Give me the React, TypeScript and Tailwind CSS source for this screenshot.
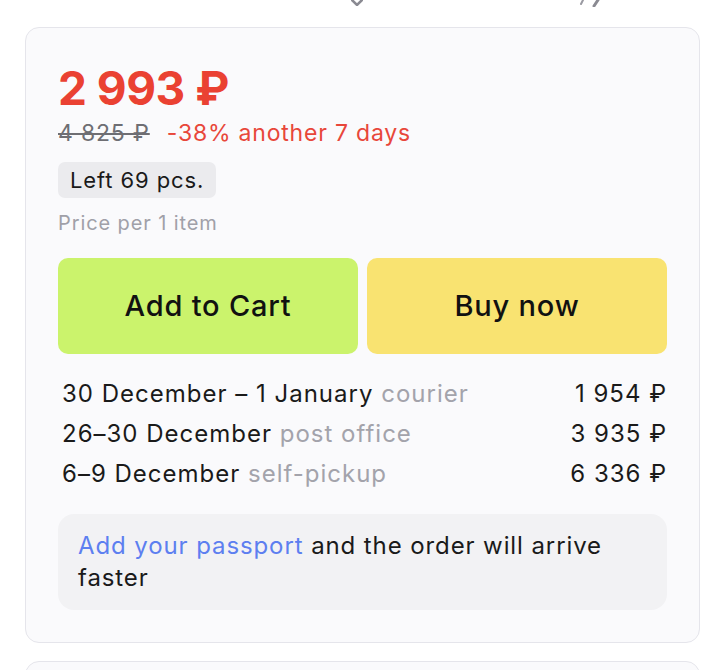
import React from 'react';

const deliveries = [
  { date: '30 December – 1 January', kind: 'courier', price: '1 954 ₽' },
  { date: '26–30 December', kind: 'post office', price: '3 935 ₽' },
  { date: '6–9 December', kind: 'self-pickup', price: '6 336 ₽' },
];

const App: React.FC = () => {
  return (
    <div className="w-[718px] h-[670px] overflow-hidden bg-white font-['Inter','Liberation_Sans',sans-serif] text-[#1a1a1a]">
      {/* cut-off icons of the block above */}
      <div className="h-[27px] flex items-start">
        <svg className="ml-[351px]" width="12" height="6" viewBox="0 0 12 6">
          <path d="M1 0 L6 5 L11 0" fill="none" stroke="#8a8a92" strokeWidth="2.5" strokeLinecap="round" />
        </svg>
        <svg className="ml-[216px]" width="24" height="7" viewBox="0 0 24 7">
          <path d="M4 0 L2 4" stroke="#9a9aa2" strokeWidth="2" strokeLinecap="round" />
          <path d="M19 0 L15 6" stroke="#8a8a92" strokeWidth="3" strokeLinecap="round" />
        </svg>
      </div>

      {/* price card */}
      <div className="ml-[25px] w-[675px] rounded-[14px] border border-[#e5e5eb] bg-[#fafafc] px-8 pt-9 pb-8">
        <div className="text-[46px] leading-[48px] font-bold text-[#ea4132] tracking-[-0.5px]">2 993 ₽</div>
        <div className="mt-[7px] flex items-center gap-[17px] text-[23px] leading-[28px] tracking-[0.8px]">
          <span className="text-[#6e6e73] line-through">4 825 ₽</span>
          <span className="text-[#e8473a]">-38% another 7 days</span>
        </div>
        <div className="mt-[15px] inline-flex h-9 items-center rounded-[7px] bg-[#ebebee] px-3 text-[22px] leading-9 tracking-[0.9px]">
          Left 69 pcs.
        </div>
        <div className="mt-[13px] text-[20px] leading-6 tracking-[0.9px] text-[#a0a0a8]">Price per 1 item</div>

        <div className="mt-[23px] grid grid-cols-2 gap-[9px]">
          <button className="h-24 rounded-[10px] bg-[#cbf36c] text-[29px] font-medium tracking-[0.8px] text-[#111]">Add to Cart</button>
          <button className="h-24 rounded-[10px] bg-[#f9e371] text-[29px] font-medium tracking-[0.8px] text-[#111]">Buy now</button>
        </div>

        <div className="mt-5 flex flex-col pl-[4px] text-[24px] leading-10 tracking-[1px]">
          {deliveries.map((d) => (
            <div key={d.kind} className="flex justify-between">
              <span>
                {d.date} <span className="text-[#a3a3ab]">{d.kind}</span>
              </span>
              <span>{d.price}</span>
            </div>
          ))}
        </div>

        <div className="mt-5 rounded-2xl bg-[#f2f2f4] pl-5 pr-8 py-4 text-[24px] leading-8 tracking-[0.9px]">
          <span className="text-[#5d7ff0]">Add your passport</span> and the order will arrive faster
        </div>
      </div>

      {/* next card */}
      <div className="mt-[18px] ml-[25px] w-[675px] h-[40px] rounded-[14px] border border-[#e5e5eb] bg-[#fafafc]" />
    </div>
  );
};

export default App;
